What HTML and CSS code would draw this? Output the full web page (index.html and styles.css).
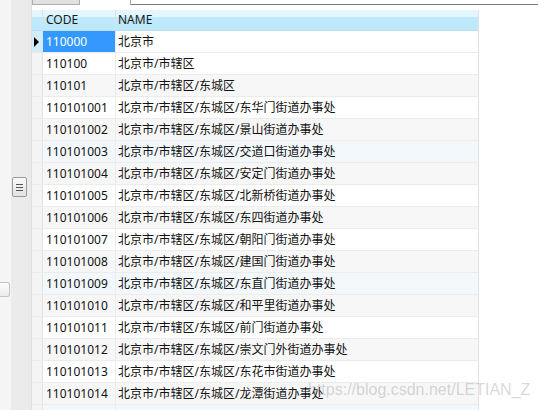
FILE: index.html
```html
<!DOCTYPE html>
<html>
<head>
<meta charset="utf-8">
<link rel="stylesheet" href="styles.css">
</head>
<body>
<div class="app">
  <div class="side-a">
    <div class="tab"></div>
  </div>
  <div class="side-b">
    <div class="thumb"><span></span><span></span><span></span></div>
  </div>
  <div class="main">
    <div class="topbar">
      <div class="btn"></div>
      <div class="field"></div>
    </div>
    <div class="grid">
      <div class="row head">
        <div class="rh"></div>
        <div class="c1">CODE</div>
        <div class="c2">NAME</div>
      </div>
      <div class="row sel">
        <div class="rh"><span class="tri"></span></div>
        <div class="c1">110000</div>
        <div class="c2">北京市</div>
      </div>
      <div class="row"><div class="rh"></div><div class="c1">110100</div><div class="c2">北京市/市辖区</div></div>
      <div class="row alt"><div class="rh"></div><div class="c1">110101</div><div class="c2">北京市/市辖区/东城区</div></div>
      <div class="row"><div class="rh"></div><div class="c1">110101001</div><div class="c2">北京市/市辖区/东城区/东华门街道办事处</div></div>
      <div class="row alt"><div class="rh"></div><div class="c1">110101002</div><div class="c2">北京市/市辖区/东城区/景山街道办事处</div></div>
      <div class="row blue"><div class="rh"></div><div class="c1">110101003</div><div class="c2">北京市/市辖区/东城区/交道口街道办事处</div></div>
      <div class="row alt"><div class="rh"></div><div class="c1">110101004</div><div class="c2">北京市/市辖区/东城区/安定门街道办事处</div></div>
      <div class="row"><div class="rh"></div><div class="c1">110101005</div><div class="c2">北京市/市辖区/东城区/北新桥街道办事处</div></div>
      <div class="row alt"><div class="rh"></div><div class="c1">110101006</div><div class="c2">北京市/市辖区/东城区/东四街道办事处</div></div>
      <div class="row"><div class="rh"></div><div class="c1">110101007</div><div class="c2">北京市/市辖区/东城区/朝阳门街道办事处</div></div>
      <div class="row alt"><div class="rh"></div><div class="c1">110101008</div><div class="c2">北京市/市辖区/东城区/建国门街道办事处</div></div>
      <div class="row blue"><div class="rh"></div><div class="c1">110101009</div><div class="c2">北京市/市辖区/东城区/东直门街道办事处</div></div>
      <div class="row alt"><div class="rh"></div><div class="c1">110101010</div><div class="c2">北京市/市辖区/东城区/和平里街道办事处</div></div>
      <div class="row"><div class="rh"></div><div class="c1">110101011</div><div class="c2">北京市/市辖区/东城区/前门街道办事处</div></div>
      <div class="row alt"><div class="rh"></div><div class="c1">110101012</div><div class="c2">北京市/市辖区/东城区/崇文门外街道办事处</div></div>
      <div class="row"><div class="rh"></div><div class="c1">110101013</div><div class="c2">北京市/市辖区/东城区/东花市街道办事处</div></div>
      <div class="row alt"><div class="rh"></div><div class="c1">110101014</div><div class="c2">北京市/市辖区/东城区/龙潭街道办事处</div></div>
      <div class="row blue"><div class="rh"></div><div class="c1"></div><div class="c2"></div></div>
    </div>
  </div>
</div>
<div class="watermark">https://blog.csdn.net/LETIAN_Z</div>
</body>
</html>
```
FILE: styles.css
```css
html, body {
  margin: 0;
  padding: 0;
}
body {
  width: 539px;
  height: 410px;
  overflow: hidden;
  background: #ffffff;
  position: relative;
  font-family: "Noto Sans", "Noto Sans CJK SC", sans-serif;
  font-size: 12px;
  color: #111;
}
.app {
  display: flex;
  height: 410px;
  overflow: hidden;
}
.side-a {
  width: 11px;
  flex-shrink: 0;
  background: #f5f5f5;
  padding-top: 282px;
  box-sizing: border-box;
}
.tab {
  width: 10px;
  height: 15px;
  box-sizing: border-box;
  border: 1px solid #c4c4c4;
  border-left: none;
  border-radius: 0 3px 3px 0;
  background: linear-gradient(#fdfdfd, #ececec);
}
.side-b {
  width: 20px;
  flex-shrink: 0;
  background: #ebebeb;
  border-right: 1px solid #dedede;
  padding-top: 177px;
  box-sizing: content-box;
}
.thumb {
  width: 15px;
  height: 20px;
  margin-left: 1px;
  box-sizing: border-box;
  border: 1px solid #9a9a9a;
  border-radius: 2px;
  background: linear-gradient(#fafafa, #e2e2e2);
  display: flex;
  flex-direction: column;
  align-items: center;
  justify-content: center;
  gap: 2px;
}
.thumb span {
  display: block;
  width: 7px;
  height: 1px;
  background: #555;
}
.main {
  flex: 1;
  display: flex;
  flex-direction: column;
  overflow: hidden;
}
.topbar {
  height: 10px;
  flex-shrink: 0;
  display: flex;
  align-items: flex-start;
}
.btn {
  width: 48px;
  height: 5px;
  box-sizing: border-box;
  border: 1px solid #adadad;
  border-top: none;
  background: #e1e1e1;
}
.field {
  margin-left: 50px;
  width: 408px;
  height: 5px;
  box-sizing: border-box;
  border-left: 1px solid #a8a8a8;
  border-bottom: 1px solid #7a7a7a;
}
.grid {
  width: 446px;
  flex-shrink: 0;
  border-right: 1px solid #e3e3e3;
  display: flex;
  flex-direction: column;
}
.row {
  display: flex;
  flex-shrink: 0;
  height: 22px;
  box-sizing: border-box;
  border-bottom: 1px solid #ececec;
  background: #ffffff;
}
.row.alt { background: #f7f7f7; }
.row.blue { background: #f3f8fd; }
.rh {
  width: 11px;
  box-sizing: border-box;
  border-right: 1px solid #e2e2e2;
  background: #f4f4f4;
  display: flex;
  align-items: center;
  justify-content: center;
}
.c1 {
  width: 73px;
  box-sizing: border-box;
  border-right: 1px solid #ececec;
  padding-left: 3px;
  line-height: 21px;
  white-space: nowrap;
  overflow: hidden;
}
.c2 {
  flex: 1;
  padding-left: 2px;
  line-height: 21px;
  white-space: nowrap;
  overflow: hidden;
}
.row.head {
  height: 21px;
  background: linear-gradient(#e3f6fd 0, #e3f6fd 7px, #bfeafb 7px, #bce8fa 100%);
  border-bottom: 1px solid #b6e1f3;
  color: #1a1a1a;
}
.row.head .rh {
  background: transparent;
  border-right: 1px solid #cbe9f5;
}
.row.head .c1 {
  border-right: 1px solid #cbe9f5;
  line-height: 20px;
}
.row.head .c2 { line-height: 20px; }
.row.sel .rh { background: #d3ecf9; }
.row.sel .c1 {
  background: #3399ff;
  color: #ffffff;
}
.tri {
  width: 0;
  height: 0;
  border-top: 5px solid transparent;
  border-bottom: 5px solid transparent;
  border-left: 5px solid #000;
  margin-left: -2px;
}
.watermark {
  position: absolute;
  left: 308px;
  top: 381px;
  font-family: "Liberation Sans", Arial, sans-serif;
  font-size: 16px;
  color: rgba(120, 120, 120, 0.3);
  white-space: nowrap;
}
```
